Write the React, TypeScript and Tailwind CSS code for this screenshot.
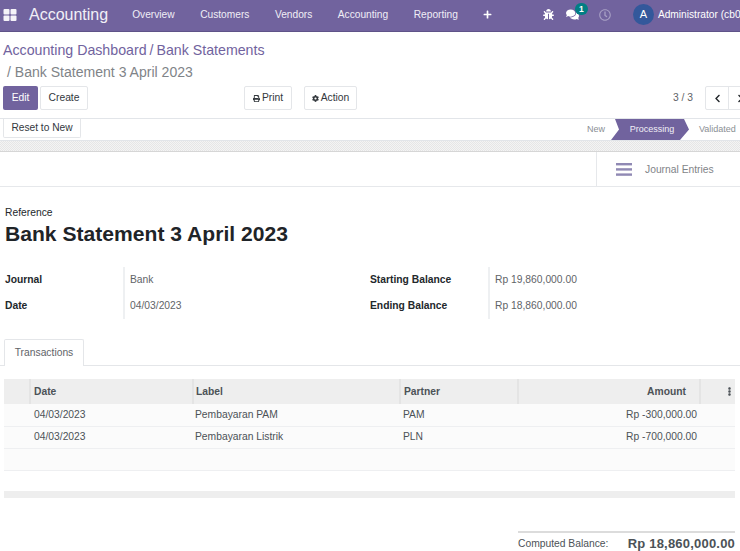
import { FaBug, FaChevronLeft, FaChevronRight, FaCog, FaComments, FaEllipsisV, FaPlus, FaPrint, FaRegClock } from 'react-icons/fa';

const menuItems = ['Overview', 'Customers', 'Vendors', 'Accounting', 'Reporting'];

const transactions = [
  { date: '04/03/2023', label: 'Pembayaran PAM', partner: 'PAM', amount: 'Rp -300,000.00' },
  { date: '04/03/2023', label: 'Pembayaran Listrik', partner: 'PLN', amount: 'Rp -700,000.00' },
];

function NavBar() {
  return (
    <header className="flex h-[32px] shrink-0 items-center border-b border-[#5f5388] bg-[#71639e] pb-[2px] text-[10.2px] text-white">
      <svg className="ml-[3px] h-[14px] w-[14px] shrink-0" viewBox="0 0 14 14" fill="#f4f2f8">
        <rect x="0.5" y="1" width="6" height="5.5" rx="1" />
        <rect x="7.5" y="1" width="6" height="5.5" rx="1" />
        <rect x="0.5" y="7.5" width="6" height="5.5" rx="1" />
        <rect x="7.5" y="7.5" width="6" height="5.5" rx="1" />
      </svg>
      <span className="ml-[12px] shrink-0 text-[16px] leading-none text-[#f2f0f7]">Accounting</span>
      <nav className="ml-[24px] flex shrink-0 gap-[25.5px]">
        {menuItems.map((item) => (
          <span key={item} className="text-[#f0eef6]">{item}</span>
        ))}
      </nav>
      <FaPlus className="ml-[25px] h-[9px] w-[9px] shrink-0" />
      <FaBug className="ml-[51px] h-[11px] w-[11px] shrink-0" />
      <span className="relative ml-[12px] shrink-0">
        <FaComments className="h-[13px] w-[13px]" />
        <span className="absolute left-[9px] top-[-5px] flex h-[12px] w-[13px] items-center justify-center rounded-full bg-[#017e84] text-[8.5px] font-bold">1</span>
      </span>
      <FaRegClock className="ml-[20px] h-[12px] w-[12px] shrink-0 text-[#a79fc4]" />
      <span className="ml-[22px] flex h-[21px] w-[21px] shrink-0 items-center justify-center rounded-full bg-[#33589b] text-[11px]">A</span>
      <span className="ml-[4px] shrink-0 whitespace-nowrap">Administrator (cb0</span>
    </header>
  );
}

function ControlPanel() {
  return (
    <section className="h-[87px] shrink-0 border-b border-[#e2e5e9] pl-[3px]">
      <div className="pt-[7px] text-[14.2px] leading-[22px] text-[#71639e]">
        Accounting Dashboard<span className="mx-[3px]">/</span>Bank Statements
      </div>
      <div className="pl-[4px] text-[14.05px] leading-[22px] text-[#7f8488]">/ Bank Statement 3 April 2023</div>
      <div className="mt-[3px] flex items-center text-[10.3px]">
        <button className="h-[24px] w-[35px] shrink-0 rounded-[2px] bg-[#71639e] text-white">Edit</button>
        <button className="ml-[2px] h-[24px] w-[48px] shrink-0 rounded-[2px] border border-[#e4e6e9] text-[#33383d]">Create</button>
        <button className="ml-[156px] flex h-[24px] w-[48px] shrink-0 items-center justify-center gap-[2px] rounded-[2px] border border-[#e4e6e9] text-[#33383d]">
          <FaPrint className="h-[7px] w-[7px]" /> Print
        </button>
        <button className="ml-[12px] flex h-[24px] w-[53px] shrink-0 items-center justify-center gap-[2px] rounded-[2px] border border-[#e4e6e9] text-[#33383d]">
          <FaCog className="h-[7px] w-[7px]" /> Action
        </button>
        <span className="ml-[316px] shrink-0 whitespace-nowrap text-[#5f6468]">3 / 3</span>
        <span className="ml-[12px] flex h-[24px] w-[48px] shrink-0 rounded-[2px] border border-[#e4e6e9] text-[#22262a]">
          <span className="flex w-[23px] items-center justify-center border-r border-[#e4e6e9]">
            <FaChevronLeft className="h-[9px] w-[9px]" />
          </span>
          <span className="flex flex-1 items-center justify-center">
            <FaChevronRight className="h-[9px] w-[9px]" />
          </span>
        </span>
      </div>
    </section>
  );
}

function StatusBar() {
  return (
    <section className="flex h-[22px] shrink-0 items-center border-b border-[#e2e5e9] pl-[3px] text-[10.2px]">
      <button className="h-[19px] w-[78px] shrink-0 self-start rounded-b-[2px] border border-t-0 border-[#e4e6e9] text-[#33383d]">Reset to New</button>
      <span className="ml-[506px] shrink-0 text-[9px] text-[#8a8f94]">New</span>
      <span className="ml-[6px] flex h-[21px] w-[78px] shrink-0 items-center justify-center self-start bg-[#71639e] pl-[4px] text-[9px] text-[#f2f0f7] [clip-path:polygon(4px_0,73px_0,78px_10.5px,69px_21px,0_21px,8px_10.5px)]">
        Processing
      </span>
      <span className="ml-[10px] shrink-0 text-[9px] text-[#8a8f94]">Validated</span>
    </section>
  );
}

function InfoRow({ label, value }: { label: string; value: string }) {
  return (
    <div className="flex h-[26px] items-center">
      <span className="w-[118px] shrink-0 font-bold text-[#23282c]">{label}</span>
      <span className="pl-[7px] text-[#5f6468]">{value}</span>
    </div>
  );
}

function StatementTable() {
  return (
    <table className="ml-[4px] w-[731px] table-fixed border-collapse text-[10.3px] text-[#4c5257]">
      <colgroup>
        <col className="w-[26px]" />
        <col className="w-[163px]" />
        <col className="w-[207px]" />
        <col className="w-[118px]" />
        <col className="w-[182px]" />
        <col className="w-[35px]" />
      </colgroup>
      <thead>
        <tr className="h-[25px] bg-[#eeeeee] text-left font-bold text-[#4c5257]">
          <th />
          <th className="border-l-2 border-[#e4e4e4] pl-[3px]">Date</th>
          <th className="border-l-2 border-[#e4e4e4] pl-[2px]">Label</th>
          <th className="border-l-2 border-[#e4e4e4] pl-[3px]">Partner</th>
          <th className="border-l-2 border-[#e4e4e4] pr-[13px] text-right">Amount</th>
          <th className="border-l-2 border-[#e4e4e4]">
            <FaEllipsisV className="ml-[24px] h-[9px] w-[9px]" />
          </th>
        </tr>
      </thead>
      <tbody>
        {transactions.map((row) => (
          <tr key={row.label} className="h-[22px] border-b border-[#eeeff1] bg-[#fbfbfb]">
            <td />
            <td className="pl-[4px]">{row.date}</td>
            <td className="pl-[2px]">{row.label}</td>
            <td className="pl-[3px]">{row.partner}</td>
            <td className="pr-[3px] text-right">{row.amount}</td>
            <td />
          </tr>
        ))}
        <tr className="h-[22px] border-b border-[#eeeff1] bg-[#fbfbfb]">
          <td colSpan={6} />
        </tr>
      </tbody>
      <tfoot>
        <tr className="h-[21px]">
          <td colSpan={6} />
        </tr>
        <tr className="h-[7px] bg-[#eeeeee]">
          <td colSpan={6} />
        </tr>
      </tfoot>
    </table>
  );
}

export default function App() {
  return (
    <div className="flex h-[551px] w-[740px] flex-col overflow-hidden bg-white font-['Liberation_Sans',Arial,sans-serif] text-[10.3px]">
      <NavBar />
      <ControlPanel />
      <StatusBar />
      <div className="h-[11px] shrink-0 border-b border-[#d6d6d6] bg-[repeating-conic-gradient(#e6e6e6_0_25%,#f4f4f4_0_50%)] bg-[length:2px_2px]" />
      <div className="flex h-[35px] shrink-0 justify-end border-b border-[#e6e8eb]">
        <div className="flex w-[144px] items-center border-l border-[#e6e8eb] pl-[19px]">
          <svg className="h-[13px] w-[16px]" viewBox="0 0 16 13" fill="#9089b4">
            <rect y="0" width="16" height="2.4" />
            <rect y="5.2" width="16" height="2.4" />
            <rect y="10.4" width="16" height="2.4" />
          </svg>
          <span className="ml-[13px] mt-[1px] text-[#7f8488]">Journal Entries</span>
        </div>
      </div>

      <div className="pl-[5px] pt-[19px] leading-[13px] text-[#23282c]">Reference</div>
      <h1 className="mt-[1px] pl-[5px] text-[21.1px] font-bold leading-[28px] text-[#1f2428]">Bank Statement 3 April 2023</h1>

      <div className="mt-[19px] flex pl-[5px]">
        <div className="relative w-[365px]">
          <InfoRow label="Journal" value="Bank" />
          <InfoRow label="Date" value="04/03/2023" />
          <span className="absolute bottom-0 left-[118px] top-0 w-[2px] bg-[#eef0f2]" />
        </div>
        <div className="relative">
          <InfoRow label="Starting Balance" value="Rp 19,860,000.00" />
          <InfoRow label="Ending Balance" value="Rp 18,860,000.00" />
          <span className="absolute bottom-0 left-[118px] top-0 w-[2px] bg-[#eef0f2]" />
        </div>
      </div>

      <div className="mt-[20px] flex h-[27px] shrink-0 border-b border-[#e4e6e9] pl-[4px]">
        <div className="flex h-[27px] w-[80px] items-center justify-center rounded-t-[2px] border border-b-0 border-[#e4e6e9] bg-white text-[#5f6468]">Transactions</div>
      </div>

      <div className="mt-[13px]">
        <StatementTable />
      </div>

      <div className="ml-[518px] mt-[33px] flex w-[217px] items-center border-t-2 border-[#dcdcdc] pt-[1px]">
        <span className="w-[110px] text-[#4c5257]">Computed Balance:</span>
        <span className="whitespace-nowrap text-[13px] font-bold tracking-[0.2px] text-[#4c5257]">Rp 18,860,000.00</span>
      </div>
    </div>
  );
}
